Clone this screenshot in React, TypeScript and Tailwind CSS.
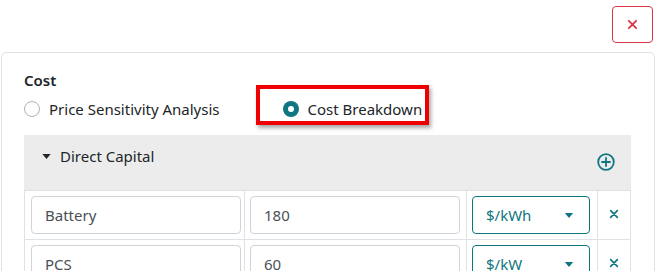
import { useState } from "react";

const rows = [
  { name: "Battery", value: "180", unit: "$/kWh" },
  { name: "PCS", value: "60", unit: "$/kW" },
];

const Caret = ({ className }: { className: string }) => (
  <svg className={className} viewBox="0 0 10 6" fill="currentColor">
    <path d="M0 0h10L5 6z" />
  </svg>
);

const Cross = ({ className }: { className: string }) => (
  <svg className={className} viewBox="0 0 12 12" fill="none" stroke="currentColor" strokeWidth="2" strokeLinecap="round">
    <path d="M2 2l8 8M10 2l-8 8" />
  </svg>
);

export default function App() {
  const [mode, setMode] = useState("breakdown");

  return (
    <div className="relative w-[660px] h-[271px] overflow-hidden bg-white text-[#212529] font-['Noto_Sans','Open_Sans',sans-serif]">
      {/* Close button */}
      <div className="flex justify-end pt-[6px] pr-[7px]">
        <button className="w-[41px] h-[37px] flex items-center justify-center border border-[#dc3545] rounded-[4px] text-[#dc3545]">
          <Cross className="w-[11px] h-[11px]" />
        </button>
      </div>

      {/* Card */}
      <div className="mt-[9px] ml-px w-[654px] h-[260px] border border-[#dee2e6] rounded-[5px] pl-[22px] pr-[22px] pt-[16px]">
        <div className="text-[15px] font-semibold leading-[22px]">Cost</div>

        <div className="flex items-center gap-[40px] mt-[5px] h-[26px]">
          <label className="flex items-center gap-[9px] text-[15px] cursor-pointer" onClick={() => setMode("price")}>
            <span
              className={
                mode === "price"
                  ? "w-[16px] h-[16px] rounded-full bg-[#0e7680] flex items-center justify-center"
                  : "w-[16px] h-[16px] rounded-full border border-[#adb5bd] bg-white"
              }
            >
              {mode === "price" && <span className="w-[6px] h-[6px] rounded-full bg-white" />}
            </span>
            Price Sensitivity Analysis
          </label>
          <label className="flex items-center gap-[9px] text-[15px] cursor-pointer ml-[23px]" onClick={() => setMode("breakdown")}>
            <span
              className={
                mode === "breakdown"
                  ? "w-[16px] h-[16px] rounded-full bg-[#0e7680] flex items-center justify-center"
                  : "w-[16px] h-[16px] rounded-full border border-[#adb5bd] bg-white"
              }
            >
              {mode === "breakdown" && <span className="w-[6px] h-[6px] rounded-full bg-white" />}
            </span>
            Cost Breakdown
          </label>
        </div>

        {/* Direct Capital section */}
        <div className="mt-[13px] w-[607px]">
          <div className="h-[55px] bg-[#ececec] flex justify-between pl-[18px] pr-[16px]">
            <div className="flex items-center gap-[9px] h-[42px] text-[15px]">
              <Caret className="w-[9px] h-[5px] text-[#212529]" />
              Direct Capital
            </div>
            <div className="flex items-end pb-[19px]">
              <svg className="w-[18px] h-[18px] text-[#0e7680]" viewBox="0 0 18 18" fill="none" stroke="currentColor" strokeWidth="1.8">
                <circle cx="9" cy="9" r="7.8" />
                <path d="M9 5v8M5 9h8" strokeLinecap="round" />
              </svg>
            </div>
          </div>

          <div className="border-l border-r border-[#dee2e6]">
            {rows.map((r) => (
              <div key={r.name} className="flex border-t border-[#dee2e6] h-[49px]">
                <div className="w-[220px] pl-[6px] pr-[3px] pt-[5px] border-r border-[#dee2e6]">
                  <div className="h-[38px] border border-[#ced4da] rounded-[4px] flex items-center px-[13px] text-[15px] text-[#495057]">
                    {r.name}
                  </div>
                </div>
                <div className="w-[222px] pl-[5px] pr-[6px] pt-[5px] border-r border-[#dee2e6]">
                  <div className="h-[38px] border border-[#ced4da] rounded-[4px] flex items-center px-[13px] text-[15px] text-[#495057]">
                    {r.value}
                  </div>
                </div>
                <div className="w-[131px] pl-[5px] pr-[7px] pt-[5px] border-r border-[#dee2e6]">
                  <div className="h-[38px] border border-[#0e7680] rounded-[4px] flex items-center justify-between pl-[13px] pr-[15px] text-[15px] text-[#0e7680]">
                    {r.unit}
                    <Caret className="w-[10px] h-[5px]" />
                  </div>
                </div>
                <div className="flex-1 flex items-center justify-center pb-[2px] text-[#0e7680]">
                  <Cross className="w-[10px] h-[10px]" />
                </div>
              </div>
            ))}
          </div>
        </div>
      </div>

      {/* Highlight annotation */}
      <div className="absolute left-[256px] top-[85px] w-[173px] h-[40px] border-[4px] border-[#ee0000] shadow-[2px_3px_4px_rgba(0,0,0,0.35)] pointer-events-none" />
    </div>
  );
}
